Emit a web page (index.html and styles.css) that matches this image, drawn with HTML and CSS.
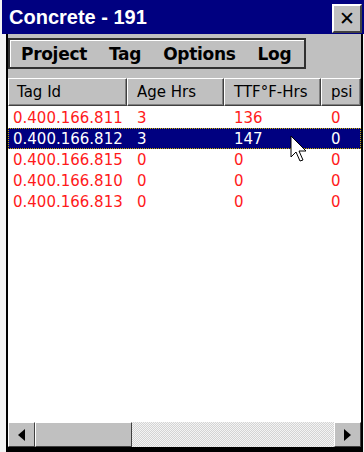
FILE: index.html
```html
<!DOCTYPE html>
<html lang="en">
<head>
  <meta charset="UTF-8">
  <title>Concrete - 191</title>
  <link rel="stylesheet" href="styles.css">
</head>
<body>

<div class="window">
  <div class="titlebar">
    <span class="title">Concrete - 191</span>
    <div class="close">&#x2715;</div>
  </div>

  <div class="client">
    <div class="menuarea">
      <div class="menubar">
        <span>Project</span>
        <span>Tag</span>
        <span>Options</span>
        <span>Log</span>
      </div>
    </div>

    <div class="list">
      <div class="row head">
        <div class="c1">Tag Id</div>
        <div class="c2">Age Hrs</div>
        <div class="c3">TTF&deg;F-Hrs</div>
        <div class="c4">psi</div>
      </div>
      <div class="row">
        <div class="c1">0.400.166.811</div><div class="c2">3</div><div class="c3">136</div><div class="c4">0</div>
      </div>
      <div class="row sel">
        <div class="c1">0.400.166.812</div><div class="c2">3</div><div class="c3">147</div><div class="c4">0</div>
        <svg class="cursor" width="20" height="30" viewBox="0 0 20 30">
          <path d="M1 1 L1 22 L6 17 L10 26 L13 25 L9 16 L16 16 Z" fill="#fff" stroke="#000" stroke-width="1"/>
        </svg>
      </div>
      <div class="row">
        <div class="c1">0.400.166.815</div><div class="c2">0</div><div class="c3">0</div><div class="c4">0</div>
      </div>
      <div class="row">
        <div class="c1">0.400.166.810</div><div class="c2">0</div><div class="c3">0</div><div class="c4">0</div>
      </div>
      <div class="row">
        <div class="c1">0.400.166.813</div><div class="c2">0</div><div class="c3">0</div><div class="c4">0</div>
      </div>
      <div class="blank"></div>
    </div>

    <div class="hscroll">
      <div class="btn"><span class="arrow-l"></span></div>
      <div class="thumb"></div>
      <div class="track"></div>
      <div class="btn"><span class="arrow-r"></span></div>
    </div>
  </div>
</div>

</body>
</html>
```

FILE: styles.css
```css
body { margin: 0; padding: 0; background: #fff; font-family: "DejaVu Sans", Verdana, sans-serif; }
.window { width: 364px; height: 452px; display: flex; flex-direction: column; box-sizing: border-box; padding-left: 2px; background: #f4f4f4; }

.titlebar { height: 34px; background: #000080; color: #fff; display: flex; align-items: center; padding-left: 7px; }
.title { font-family: "Liberation Sans", Arial, sans-serif; font-size: 20px; font-weight: bold; }
.close { margin-left: auto; margin-right: 2px; margin-top: 2px; width: 30px; height: 29px; box-sizing: border-box; background: #c0c0c0; color: #000; font-size: 19px; display: flex; align-items: center; justify-content: center; border: 2px solid; border-color: #fff #404040 #404040 #fff; }

.client { flex: 1; display: flex; flex-direction: column; border-left: 2px solid #000; border-right: 2px solid #000; border-bottom: 5px solid #000; margin-left: 4px; margin-right: 1px; background: #fff; }

.menuarea { height: 44px; background: #c0c0c0; box-sizing: border-box; padding-top: 4px; }
.menubar { width: 298px; height: 31px; box-sizing: border-box; border: 2px solid #303030; box-shadow: inset 1px 1px 0 #fff; display: flex; align-items: center; gap: 22px; padding-left: 11px; font-size: 17px; font-weight: bold; letter-spacing: -0.3px; }

.list { flex: 1; display: flex; flex-direction: column; font-size: 15px; color: #ff1a1a; }
.row { display: flex; height: 21px; align-items: center; position: relative; }
.row > div { box-sizing: border-box; padding-left: 10px; white-space: nowrap; overflow: hidden; }
.row > .c1 { padding-left: 5px; }
.head + .row { margin-top: 1px; }
.c1 { width: 119px; }
.c2 { width: 97px; }
.c3 { width: 97px; }
.c4 { flex: 1; }
.head { height: 28px; color: #000; background: #c0c0c0; font-size: 15px; }
.head > div { height: 28px; line-height: 26px; border: 1px solid; border-color: #fff #404040 #404040 #fff; box-shadow: inset -1px -1px 0 #808080; padding-left: 9px; }
.head > .c1 { padding-left: 8px; }
.sel { background: #000080; color: #fff; outline: 1px dotted #c8b000; outline-offset: -1px; }
.cursor { position: absolute; left: 282px; top: 7px; }
.blank { flex: 1; }

.hscroll { height: 25px; display: flex; background: #c0c0c0; }
.btn { width: 27px; box-sizing: border-box; border: 1px solid; border-color: #fff #404040 #404040 #fff; background: #c0c0c0; display: flex; align-items: center; justify-content: center; }
.thumb { width: 97px; box-sizing: border-box; border: 1px solid; border-color: #fff #404040 #404040 #fff; background: #c0c0c0; }
.track { flex: 1; background-color: #e6e6e6; background-image: repeating-conic-gradient(#d4d4d4 0 25%, #f4f4f4 0 50%); background-size: 2px 2px; }
.arrow-l { width: 0; height: 0; border-top: 6px solid transparent; border-bottom: 6px solid transparent; border-right: 7px solid #000; }
.arrow-r { width: 0; height: 0; border-top: 6px solid transparent; border-bottom: 6px solid transparent; border-left: 7px solid #000; }
```
